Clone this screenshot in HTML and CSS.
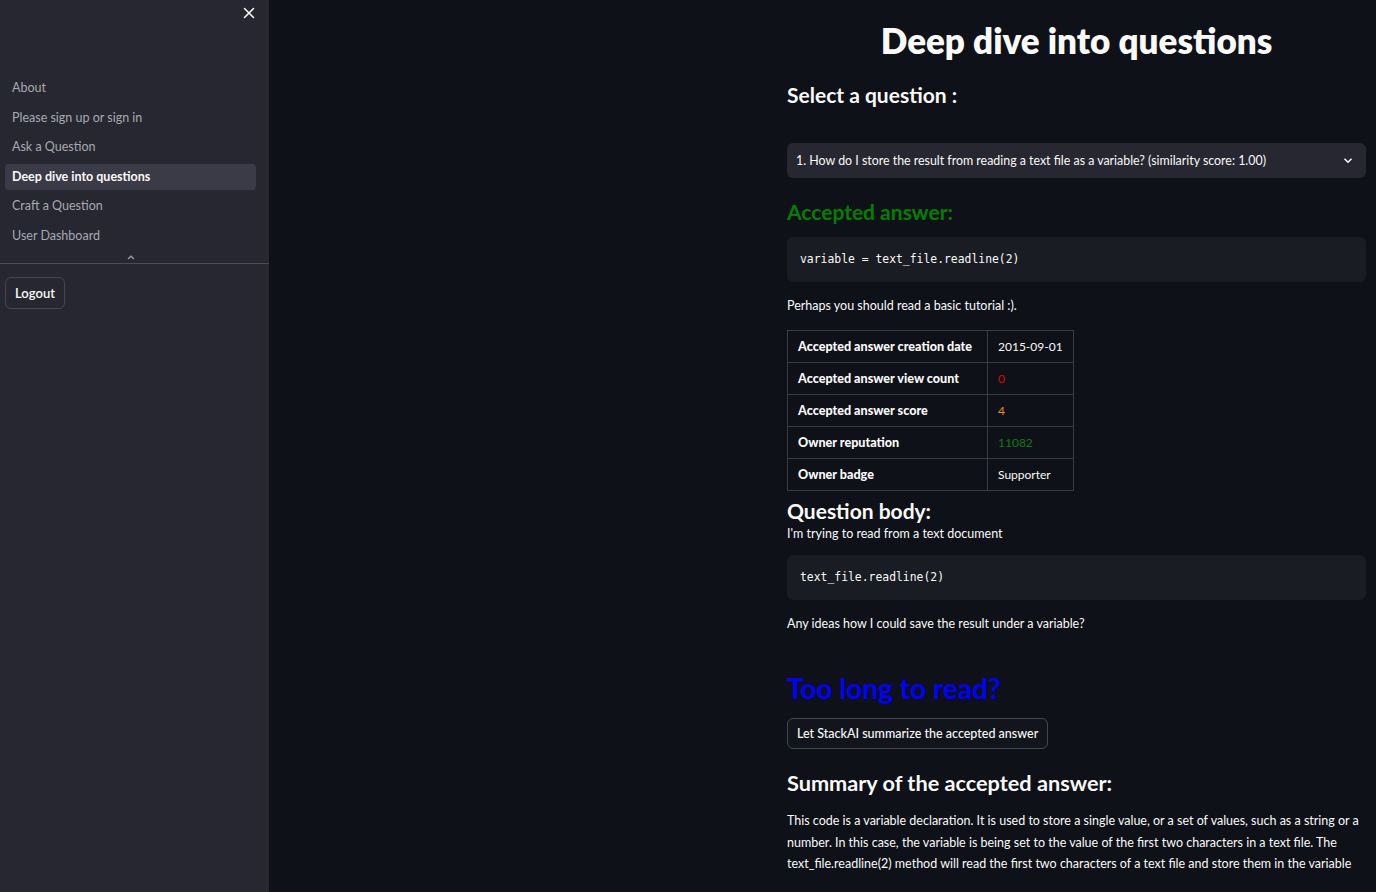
FILE: index.html
```html
<!DOCTYPE html>
<html lang="en">
<head>
<meta charset="utf-8">
<title>Deep dive into questions</title>
<link rel="stylesheet" href="styles.css">
</head>
<body>
<div class="app">
  <aside class="sidebar">
    <div class="sb-top">
      <button class="close" aria-label="Close">
        <svg width="12" height="12" viewBox="0 0 12 12"><path d="M1.5 1.5 L10.5 10.5 M10.5 1.5 L1.5 10.5" stroke="#fafafa" stroke-width="1.6" stroke-linecap="round"/></svg>
      </button>
    </div>
    <nav class="nav">
      <a class="nav-item">About</a>
      <a class="nav-item">Please sign up or sign in</a>
      <a class="nav-item">Ask a Question</a>
      <a class="nav-item active">Deep dive into questions</a>
      <a class="nav-item">Craft a Question</a>
      <a class="nav-item">User Dashboard</a>
    </nav>
    <div class="collapse">
      <svg width="8" height="5" viewBox="0 0 8 5"><path d="M1 4 L4 1.2 L7 4" stroke="#9a9ca4" stroke-width="1.3" fill="none"/></svg>
    </div>
    <div class="sb-divider"></div>
    <div class="sb-bottom">
      <button class="btn">Logout</button>
    </div>
  </aside>
  <main class="main">
    <div class="content">
      <h1 class="title">Deep dive into questions</h1>
      <h3 class="h3 select-label">Select a question :</h3>
      <div class="select">
        <span>1. How do I store the result from reading a text file as a variable? (similarity score: 1.00)</span>
        <svg width="10" height="7" viewBox="0 0 10 7"><path d="M1.5 1.8 L5 5.2 L8.5 1.8" stroke="#fafafa" stroke-width="1.6" fill="none"/></svg>
      </div>
      <h3 class="h3 green">Accepted answer:</h3>
      <pre class="code">variable = text_file.readline(2)</pre>
      <p class="p">Perhaps you should read a basic tutorial :).</p>
      <table class="stats">
        <tr><th>Accepted answer creation date</th><td>2015-09-01</td></tr>
        <tr><th>Accepted answer view count</th><td class="red">0</td></tr>
        <tr><th>Accepted answer score</th><td class="orange">4</td></tr>
        <tr><th>Owner reputation</th><td class="dgreen">11082</td></tr>
        <tr><th>Owner badge</th><td>Supporter</td></tr>
      </table>
      <h3 class="h3 qbody">Question body:</h3>
      <p class="p tight">I'm trying to read from a text document</p>
      <pre class="code second">text_file.readline(2)</pre>
      <p class="p">Any ideas how I could save the result under a variable?</p>
      <h2 class="h2 blue">Too long to read?</h2>
      <button class="btn summarize">Let StackAI summarize the accepted answer</button>
      <h3 class="h3 summary">Summary of the accepted answer:</h3>
      <p class="p long">This code is a variable declaration. It is used to store a single value, or a set of values, such as a string or a number. In this case, the variable is being set to the value of the first two characters in a text file. The text_file.readline(2) method will read the first two characters of a text file and store them in the variable</p>
    </div>
  </main>
</div>
</body>
</html>
```
FILE: styles.css
```css
* { box-sizing: border-box; }
html, body { margin: 0; padding: 0; height: 100%; }
body {
  background: #0e1117;
  color: #fafafa;
  font-family: Lato, "Noto Sans", sans-serif;
  overflow: hidden;
}
.app { display: flex; height: 892px; }

.sidebar {
  width: 269px;
  flex: 0 0 269px;
  background: #262730;
  display: flex;
  flex-direction: column;
}
.sb-top { display: flex; justify-content: flex-end; padding: 7px 14px 0 0; height: 75px; }
.close { background: none; border: 0; padding: 0; width: 12px; height: 12px; display: flex; }
.nav { display: flex; flex-direction: column; padding: 0 13px 0 5px; }
.nav-item {
  display: block;
  height: 26px;
  line-height: 26px;
  margin-bottom: 3.6px;
  padding-left: 7px;
  font-size: 12.5px;
  color: #a7a9b0;
  border-radius: 4px;
}
.nav-item.active { background: #3a3b46; color: #fafafa; font-weight: 700; }
.collapse { display: flex; justify-content: center; height: 10px; align-items: center; padding-right: 8px; }
.sb-divider { height: 1px; background: #4a4c56; }
.sb-bottom { padding: 13px 5px; }
.btn {
  background: #13151c;
  border: 1px solid #45474f;
  border-radius: 6px;
  color: #fafafa;
  font-family: inherit;
  font-size: 12.5px;
  font-weight: 500;
  padding: 0 10px;
  height: 32px;
  white-space: nowrap;
}
.sidebar .btn { background: transparent; width: 60px; height: 32px; padding: 0; font-weight: 600; font-size: 13px; }

.main { flex: 1; display: flex; justify-content: flex-end; padding-right: 10px; }
.content { width: 579px; padding-top: 18px; }
.title {
  text-align: center;
  font-size: 35px;
  font-weight: 800;
  margin: 0;
  line-height: 44px;
}
.h3 { font-size: 21px; font-weight: 700; margin: 0; line-height: 28px; }
.select-label { margin-top: 19px; }
.select {
  margin-top: 34px;
  height: 35px;
  background: #262730;
  border-radius: 6px;
  display: flex;
  align-items: center;
  justify-content: space-between;
  padding: 0 13px 0 9px;
  font-size: 12.4px;
}
.green { color: #008000; margin-top: 20px; }
.code {
  margin: 11px 0 0;
  background: #1a1c23;
  border-radius: 6px;
  height: 45px;
  padding: 0 13px;
  line-height: 45px;
  font-family: "DejaVu Sans Mono", monospace;
  font-size: 11.4px;
  color: #fafafa;
}
.code.second { margin-top: 12px; }
.p { font-size: 12.5px; margin: 15px 0 0; line-height: 18px; }
.p.tight { margin-top: 0; }
.stats { border-collapse: collapse; margin-top: 15px; font-size: 12px; }
.stats th, .stats td { border: 1px solid #3a3c45; height: 32px; padding: 0 10px; text-align: left; white-space: nowrap; }
.stats th { font-weight: 900; font-size: 12.6px; width: 200px; }
.stats td { width: 83px; }
.red { color: #e00000; }
.orange { color: #e69500; }
.dgreen { color: #137a13; }
.qbody { margin-top: 6px; line-height: 28px; }
.h2 { font-size: 28px; font-weight: 700; margin: 0; line-height: 36px; }
.blue { color: #0000ff; margin-top: 37px; }
.summarize { display: block; margin-top: 12px; height: 31px; padding: 0 9px; }
.summary { margin-top: 20px; font-size: 21.7px; }
.p.long { margin-top: 13px; line-height: 21.5px; }
```
